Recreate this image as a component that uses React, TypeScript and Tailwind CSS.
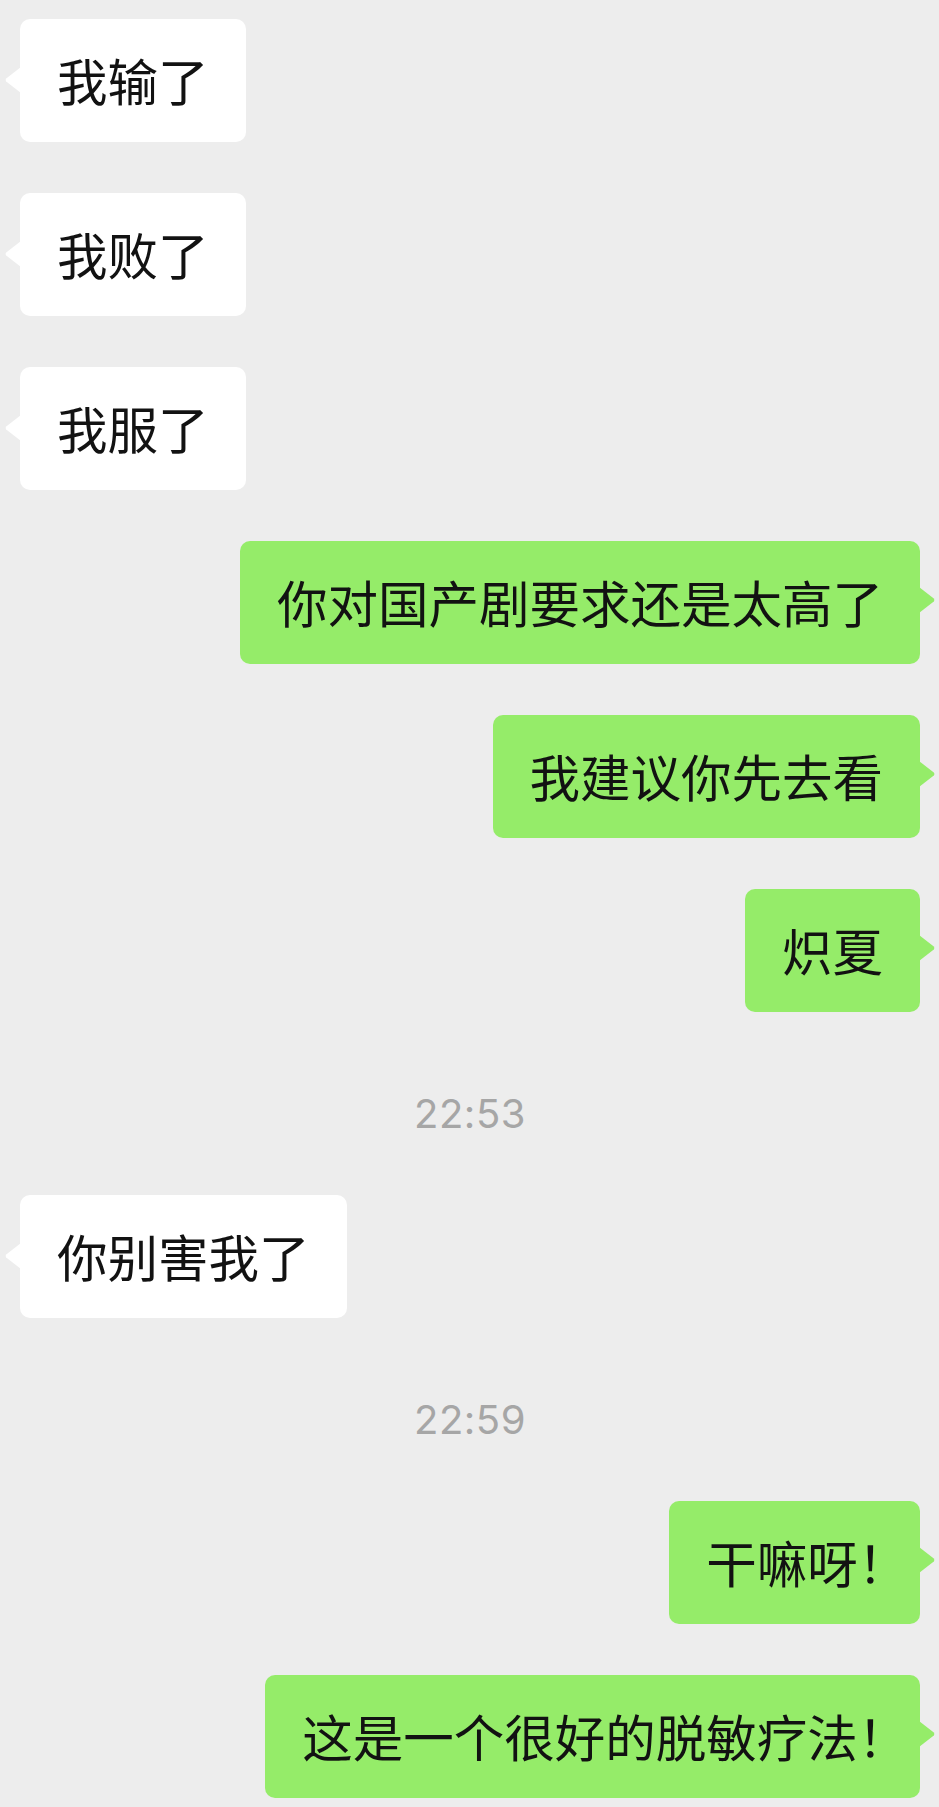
import React from "react";

type Msg =
  | { kind: "in"; text: string }
  | { kind: "out"; text: string }
  | { kind: "time"; text: string };

const messages: Msg[] = [
  { kind: "in", text: "我输了" },
  { kind: "in", text: "我败了" },
  { kind: "in", text: "我服了" },
  { kind: "out", text: "你对国产剧要求还是太高了" },
  { kind: "out", text: "我建议你先去看" },
  { kind: "out", text: "炽夏" },
  { kind: "time", text: "22:53" },
  { kind: "in", text: "你别害我了" },
  { kind: "time", text: "22:59" },
  { kind: "out", text: "干嘛呀！" },
  { kind: "out", text: "这是一个很好的脱敏疗法！" },
];

const FONT = "font-['Noto_Sans_CJK_SC','Noto_Sans',sans-serif]";

function Bubble({ side, text }: { side: "in" | "out"; text: string }) {
  const isIn = side === "in";
  return (
    <div
      className={`relative w-fit rounded-[10px] px-[37px] pt-[31px] pb-[33px] text-[50.5px] leading-[59px] text-[#121212] [font-feature-settings:'halt'] ${FONT} ${
        isIn ? "self-start bg-white" : "self-end bg-[#95ec69]"
      }`}
    >
      {text}
      {isIn ? (
        <svg
          className="absolute left-[-15px] top-[48px]"
          width="16"
          height="26"
          viewBox="0 0 16 26"
        >
          <path d="M16 0 L1.2 11.6 Q0 13 1.2 14.4 L16 26 Z" fill="#ffffff" />
        </svg>
      ) : (
        <svg
          className="absolute right-[-15px] top-[46px]"
          width="16"
          height="26"
          viewBox="0 0 16 26"
        >
          <path d="M0 0 L14.8 11.6 Q16 13 14.8 14.4 L0 26 Z" fill="#95ec69" />
        </svg>
      )}
    </div>
  );
}

export default function App() {
  return (
    <div className="min-h-[1807px] w-full bg-[#ededed]">
      <div className="flex flex-col pl-[20px] pr-[19px] pt-[19px] pb-[10px]">
        {messages.map((m, i) => {
          const prev = messages[i - 1];
          if (m.kind === "time") {
            return (
              <div
                key={i}
                className="mt-[81px] self-center text-[40px] leading-[42px] text-[#a6a6a6] font-['Inter','Liberation_Sans',sans-serif] tracking-[0.5px]"
              >
                {m.text}
              </div>
            );
          }
          const mt = i === 0 ? "mt-0" : prev && prev.kind === "time" ? "mt-[60px]" : "mt-[51px]";
          return (
            <div key={i} className={`flex flex-col ${mt}`}>
              <Bubble side={m.kind} text={m.text} />
            </div>
          );
        })}
      </div>
    </div>
  );
}
